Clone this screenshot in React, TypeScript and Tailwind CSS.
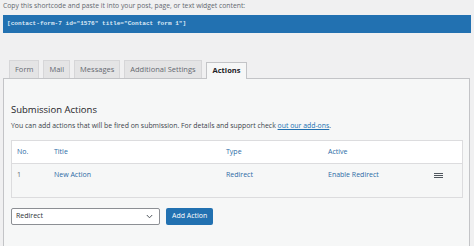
import React from "react";

const font = { fontFamily: '"Open Sans", "Noto Sans", sans-serif' };

export default function App() {
  const tabs = ["Form", "Mail", "Messages", "Additional Settings"];
  return (
    <div
      className="w-[474px] h-[246px] bg-[#f0f0f1] overflow-hidden text-[#50575e]"
      style={font}
    >
      <div className="pl-[3px] pr-[3px]">
        <p className="text-[6.8px] leading-[10px] pt-[1px] text-[#646970]">
          Copy this shortcode and paste it into your post, page, or text widget content:
        </p>
        <div className="mt-[4px] h-[18px] bg-[#2271b1] w-[468px] flex items-center pl-[4px]">
          <span
            className="text-[6.1px] font-bold text-[#dbe8f5] whitespace-pre"
            style={{ fontFamily: '"Liberation Mono", "DejaVu Sans Mono", monospace' }}
          >
            [contact-form-7 id="1576" title="Contact form 1"]
          </span>
        </div>
        <div className="mt-[27px] flex items-end pl-[6px] gap-[4px] h-[18px]">
          {tabs.map((t) => (
            <div
              key={t}
              className="h-[18px] px-[5px] flex items-center bg-[#e4e4e5] border border-b-0 border-[#d6d6d8] text-[7.5px] text-[#646970]"
            >
              {t}
            </div>
          ))}
          <div className="h-[17px] px-[6px] flex items-center bg-[#f6f7f7] border border-b-0 border-[#c3c4c7] text-[7.5px] font-bold text-[#1d2327] relative top-[1px] z-10">
            Actions
          </div>
        </div>
        <div className="w-[467px] h-[180px] bg-[#f6f7f7] border border-[#c3c4c7] px-[7px]">
          <h2 className="mt-[24px] text-[9.5px] leading-[14px] text-[#1d2327]">Submission Actions</h2>
          <p className="mt-[4px] text-[6.9px] leading-[10px] text-[#3c434a]">
            You can add actions that will be fired on submission. For details and support check{" "}
            <span className="text-[#2271b1] underline">out our add-ons</span>.
          </p>
          <div className="mt-[9px] w-[452px] border border-[#dcdcde] text-[7px]">
            <div className="h-[23px] bg-white border-b border-[#dcdcde] flex items-center text-[#2c6ba6]">
              <div className="w-[42px] pl-[5px]">No.</div>
              <div className="w-[172px]">Title</div>
              <div className="w-[102px]">Type</div>
              <div className="flex-1">Active</div>
            </div>
            <div className="h-[33px] bg-[#f6f7f7] flex items-start pt-[6px] text-[#2c6ba6]">
              <div className="w-[42px] pl-[5px] text-[#646970]">1</div>
              <div className="w-[172px]">New Action</div>
              <div className="w-[102px]">Redirect</div>
              <div className="w-[106px]">Enable Redirect</div>
              <div className="pt-[3px] flex flex-col gap-[1px]">
                <div className="w-[9px] h-[1px] bg-[#50575e]" />
                <div className="w-[9px] h-[1px] bg-[#50575e]" />
                <div className="w-[9px] h-[1px] bg-[#50575e]" />
              </div>
            </div>
          </div>
          <div className="mt-[10px] flex items-center gap-[6px]">
            <div className="w-[149px] h-[17px] bg-white border border-[#8c8f94] rounded-[2px] flex items-center justify-between pl-[4px] pr-[6px] text-[7px] text-[#2c3338]">
              <span>Redirect</span>
              <svg width="7" height="5" viewBox="0 0 7 5">
                <path d="M0.8 1 L3.5 3.8 L6.2 1" stroke="#50575e" strokeWidth="1" fill="none" />
              </svg>
            </div>
            <div className="h-[17px] px-[6px] rounded-[2px] bg-[#2271b1] text-white text-[7px] flex items-center">
              Add Action
            </div>
          </div>
        </div>
      </div>
    </div>
  );
}
